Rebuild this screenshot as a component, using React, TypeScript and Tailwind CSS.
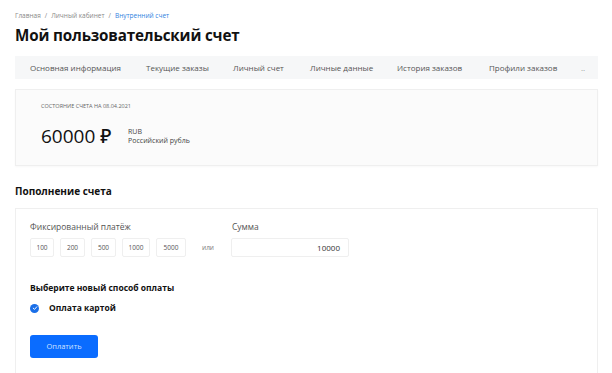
import React from "react";

const tabs = [
  "Основная информация",
  "Текущие заказы",
  "Личный счет",
  "Личные данные",
  "История заказов",
  "Профили заказов",
];

export default function App() {
  return (
    <div
      className="w-[612px] h-[373px] overflow-hidden bg-white px-[15px] text-[#222]"
      style={{ fontFamily: "'Open Sans', 'Noto Sans', sans-serif" }}
    >
      <div className="pt-[11px] text-[6.5px] text-[#888] flex gap-[4px] leading-[9px]">
        <span>Главная</span>
        <span>/</span>
        <span>Личный кабинет</span>
        <span>/</span>
        <span className="text-[#2f7fe0]">Внутренний счет</span>
      </div>
      <h1 className="mt-[4px] text-[15.2px] leading-[22px] font-bold text-[#111] tracking-[-0.15px]">
        Мой пользовательский счет
      </h1>
      <div className="mt-[10px] h-[23px] bg-[#f6f7f8] flex items-center pl-[15px] text-[8px] text-[#555] w-[583px]">
        <span className="w-[116px] shrink-0">{tabs[0]}</span>
        <span className="w-[87px] shrink-0">{tabs[1]}</span>
        <span className="w-[77px] shrink-0">{tabs[2]}</span>
        <span className="w-[87px] shrink-0">{tabs[3]}</span>
        <span className="w-[92px] shrink-0">{tabs[4]}</span>
        <span className="w-[92px] shrink-0">{tabs[5]}</span>
        <span className="text-[#999] shrink-0">..</span>
      </div>
      <div className="mt-[10px] h-[77px] w-[583px] border border-[#efefef] bg-[#fbfbfb] pl-[25px] pt-[12px] shadow-[0_1px_2px_rgba(0,0,0,0.03)]">
        <div className="text-[5.5px] text-[#666] uppercase leading-[8px]">
          Состояние счета на 08.04.2021
        </div>
        <div className="mt-[14px] flex items-center">
          <span className="text-[19px] leading-[24px] text-[#111] font-medium w-[87px]">
            60000 ₽
          </span>
          <div className="text-[7px] leading-[9px] text-[#444]">
            <div>RUB</div>
            <div>Российский рубль</div>
          </div>
        </div>
      </div>
      <h2 className="mt-[18px] text-[10px] font-bold text-[#111] leading-[14px]">
        Пополнение счета
      </h2>
      <div className="mt-[10px] w-[583px] h-[180px] border border-[#efefef] bg-white pl-[14px] pt-[12px]">
        <div className="flex items-start">
          <div>
            <div className="text-[8.5px] text-[#555] leading-[12px]">Фиксированный платёж</div>
            <div className="mt-[5px] flex gap-[6px] items-center">
              {[
                ["100", "w-[24px]"],
                ["200", "w-[25px]"],
                ["500", "w-[25px]"],
                ["1000", "w-[28px]"],
                ["5000", "w-[30px]"],
              ].map(([v, w]) => (
                <div
                  key={v}
                  className={`${w} h-[19px] border border-[#efefef] rounded-[2px] flex items-center justify-center text-[6.5px] text-[#555]`}
                >
                  {v}
                </div>
              ))}
              <span className="ml-[10px] text-[6.5px] text-[#777]">или</span>
            </div>
          </div>
          <div className="ml-[17px]">
            <div className="text-[8.5px] text-[#555] leading-[12px] pl-[1px]">Сумма</div>
            <div className="mt-[5px] w-[118px] h-[19px] border border-[#efefef] rounded-[2px] flex items-center justify-end pr-[8px] text-[8px] text-[#333]">
              10000
            </div>
          </div>
        </div>
        <div className="mt-[25px] text-[8.5px] font-bold text-[#111] leading-[12px]">
          Выберите новый способ оплаты
        </div>
        <div className="mt-[8px] flex items-center">
          <div className="w-[9px] h-[9px] rounded-full bg-[#1a6fe8] flex items-center justify-center">
            <svg width="6" height="6" viewBox="0 0 10 10">
              <path d="M2 5.2 L4.2 7.3 L8 3" stroke="white" strokeWidth="1.6" fill="none" strokeLinecap="round" strokeLinejoin="round" />
            </svg>
          </div>
          <span className="ml-[10px] text-[8.5px] font-bold text-[#111]">Оплата картой</span>
        </div>
        <button className="mt-[20px] w-[68px] h-[23px] rounded-[3px] bg-[#0a6cff] text-[7.5px] text-[#cfe2ff] flex items-center justify-center">
          Оплатить
        </button>
      </div>
    </div>
  );
}
